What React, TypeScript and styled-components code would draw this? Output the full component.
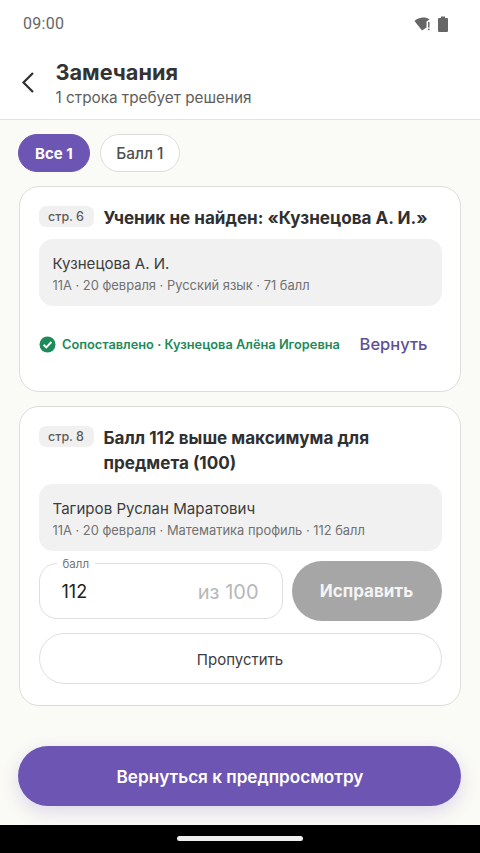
import React from "react";
import styled, { createGlobalStyle } from "styled-components";

const Global = createGlobalStyle`
  html, body { margin: 0; padding: 0; background: #fafaf6; }
  * { box-sizing: border-box; }
  #root { width: 480px; height: 853px; overflow: hidden; }
`;

const Page = styled.div`
  width: 480px;
  height: 853px;
  display: flex;
  flex-direction: column;
  background: #fafaf6;
  font-family: Inter, "Noto Sans", sans-serif;
  color: #2f2f2f;
`;

const Top = styled.header`
  height: 120px;
  background: #fff;
  border-bottom: 1.5px solid #e2e2e0;
  display: flex;
  flex-direction: column;
`;

const StatusBar = styled.div`
  height: 47px;
  padding: 0 32px 0 23px;
  display: flex;
  align-items: center;
  justify-content: space-between;
  color: #666;
  font-family: Roboto, sans-serif;
  font-size: 16px;
  letter-spacing: 0.3px;
`;

const StatusIcons = styled.div`
  display: flex;
  align-items: center;
  gap: 7px;
`;

const TitleBar = styled.div`
  display: flex;
  align-items: center;
  padding: 11px 0 0 19px;
  gap: 16.5px;
`;

const BackButton = styled.div`
  width: 20px;
  height: 24px;
  margin-bottom: 4px;
  color: #2f2f2f;
`;

const TitleText = styled.div`
  display: flex;
  flex-direction: column;
`;

const Title = styled.div`
  font-size: 21.7px;
  line-height: 28px;
  font-weight: 700;
  color: #333;
`;

const Subtitle = styled.div`
  font-size: 15.3px;
  line-height: 24px;
  color: #5e5e5e;
`;

const Content = styled.main`
  flex: 1;
  padding: 14px 19px 0;
  display: flex;
  flex-direction: column;
`;

const Chips = styled.div`
  display: flex;
  gap: 10px;
  margin: 0 0 14px -1px;
`;

const Chip = styled.div<{ $active?: boolean }>`
  height: 38px;
  padding: 0 ${(p) => (p.$active ? 16 : 15.5)}px;
  border-radius: 19px;
  display: flex;
  align-items: center;
  font-size: ${(p) => (p.$active ? 15 : 15.4)}px;
  font-weight: ${(p) => (p.$active ? 700 : 500)};
  color: ${(p) => (p.$active ? "#fff" : "#4f4f4f")};
  background: ${(p) => (p.$active ? "#6d55b4" : "#fff")};
  border: 1px solid ${(p) => (p.$active ? "#6d55b4" : "#dedede")};
`;

const Card = styled.section<{ $height: number }>`
  height: ${(p) => p.$height}px;
  background: #fff;
  border: 1.5px solid #dddddb;
  border-radius: 20px;
  padding: 18px 18.5px 0;
  margin-bottom: 14px;
  display: flex;
  flex-direction: column;
`;

const CardHead = styled.div`
  display: flex;
  align-items: flex-start;
  gap: 10px;
  margin-bottom: 9px;
`;

const PageBadge = styled.div`
  flex: none;
  width: 55px;
  height: 21px;
  margin-top: 1px;
  background: #f0f0f0;
  border-radius: 7px;
  display: flex;
  align-items: center;
  justify-content: center;
  font-size: 12.5px;
  font-weight: 500;
  color: #5c5c5c;
`;

const CardTitle = styled.div`
  font-size: 17.1px;
  line-height: 25px;
  font-weight: 700;
  color: #303030;
`;

const Info = styled.div`
  height: 67px;
  flex: none;
  background: #f1f1f1;
  border-radius: 14px;
  padding: 13px 14px 0;
`;

const InfoName = styled.div`
  font-size: 15.1px;
  line-height: 24px;
  color: #3d3d3d;
`;

const InfoMeta = styled.div`
  font-size: 12.9px;
  line-height: 18px;
  margin-top: 1px;
  color: #717171;
`;

const Resolved = styled.div`
  margin-top: 22px;
  padding: 0 14px 0 0.5px;
  height: 32px;
  display: flex;
  align-items: center;
  justify-content: space-between;
`;

const Match = styled.div`
  display: flex;
  align-items: center;
  gap: 6px;
  font-size: 12.8px;
  font-weight: 600;
  color: #1d8a5a;
`;

const Undo = styled.div`
  font-size: 16.5px;
  font-weight: 500;
  color: #5d4f96;
`;

const ScoreRow = styled.div`
  display: flex;
  align-items: center;
  gap: 9px;
  margin-top: 10px;
`;

const ScoreField = styled.div`
  position: relative;
  width: 244px;
  height: 56px;
  border: 1.5px solid #dedede;
  border-radius: 18px;
  padding: 1px 23px 0 22px;
  display: flex;
  align-items: center;
  justify-content: space-between;
`;

const ScoreLabel = styled.span`
  position: absolute;
  left: 17px;
  top: -8px;
  padding: 0 6px;
  background: #fff;
  font-size: 11.5px;
  line-height: 16px;
  color: #777;
`;

const ScoreValue = styled.span`
  font-size: 18px;
  color: #222;
`;

const ScoreMax = styled.span`
  font-size: 20px;
  color: #b8b8b8;
`;

const FixButton = styled.div`
  flex: 1;
  height: 60px;
  border-radius: 30px;
  background: #a6a6a6;
  display: flex;
  align-items: center;
  justify-content: center;
  color: #f4f4f4;
  font-size: 17px;
  font-weight: 700;
`;

const SkipButton = styled.div`
  height: 51px;
  margin-top: 12px;
  padding-top: 1px;
  border: 1.5px solid #dedede;
  border-radius: 26px;
  display: flex;
  align-items: center;
  justify-content: center;
  font-size: 15px;
  font-weight: 400;
  color: #3d3d3d;
`;

const Footer = styled.div`
  padding: 0 19px 19px 18px;
`;

const PrimaryButton = styled.div`
  height: 60px;
  padding-left: 1px;
  border-radius: 30px;
  background: #6d55b4;
  box-shadow: 0 6px 18px rgba(109, 85, 180, 0.2);
  display: flex;
  align-items: center;
  justify-content: center;
  color: #fff;
  font-size: 17.15px;
  font-weight: 600;
`;

const NavBar = styled.div`
  height: 28px;
  background: #000;
  display: flex;
  justify-content: center;
  padding-top: 11px;
`;

const NavPill = styled.div`
  width: 126px;
  height: 5px;
  border-radius: 3px;
  background: #eee;
`;

export default function App() {
  return (
    <Page>
      <Global />
      <Top>
        <StatusBar>
          <span>09:00</span>
          <StatusIcons>
            <svg width="17" height="16" viewBox="0 0 17 16" aria-hidden="true">
              <path d="M0.5 5C4 1.5 11 0 15.5 3.5L12.5 5.5V11.5L8 14.5Z" fill="#666" />
              <rect x="14" y="6" width="1.6" height="5.5" fill="#777" />
              <rect x="14" y="12.6" width="1.6" height="1.6" fill="#777" />
            </svg>
            <svg width="10" height="16" viewBox="0 0 10 16" aria-hidden="true">
              <path d="M3 0.5h4V2h2a1 1 0 0 1 1 1v12a1 1 0 0 1-1 1H1a1 1 0 0 1-1-1V3a1 1 0 0 1 1-1h2Z" fill="#666" />
            </svg>
          </StatusIcons>
        </StatusBar>
        <TitleBar>
          <BackButton>
            <svg width="20" height="24" viewBox="0 0 20 24" fill="none" stroke="currentColor" strokeWidth="2.2" aria-hidden="true">
              <path d="M14 3 4.5 12.5 14 22" />
            </svg>
          </BackButton>
          <TitleText>
            <Title>Замечания</Title>
            <Subtitle>1 строка требует решения</Subtitle>
          </TitleText>
        </TitleBar>
      </Top>
      <Content>
        <Chips>
          <Chip $active>Все 1</Chip>
          <Chip>Балл 1</Chip>
        </Chips>
        <Card $height={206}>
          <CardHead>
            <PageBadge>стр. 6</PageBadge>
            <CardTitle>Ученик не найден: «Кузнецова А. И.»</CardTitle>
          </CardHead>
          <Info>
            <InfoName>Кузнецова А. И.</InfoName>
            <InfoMeta>11А · 20 февраля · Русский язык · 71 балл</InfoMeta>
          </Info>
          <Resolved>
            <Match>
              <svg width="17" height="17" viewBox="0 0 17 17" aria-hidden="true">
                <circle cx="8.5" cy="8.5" r="8" fill="#1d8a5a" />
                <path d="M4.6 8.8 7.3 11.4 12.4 6" fill="none" stroke="#fff" strokeWidth="2" />
              </svg>
              Сопоставлено · Кузнецова Алёна Игоревна
            </Match>
            <Undo>Вернуть</Undo>
          </Resolved>
        </Card>
        <Card $height={300}>
          <CardHead>
            <PageBadge>стр. 8</PageBadge>
            <CardTitle>Балл 112 выше максимума для предмета (100)</CardTitle>
          </CardHead>
          <Info>
            <InfoName>Тагиров Руслан Маратович</InfoName>
            <InfoMeta>11А · 20 февраля · Математика профиль · 112 балл</InfoMeta>
          </Info>
          <ScoreRow>
            <ScoreField>
              <ScoreLabel>балл</ScoreLabel>
              <ScoreValue>112</ScoreValue>
              <ScoreMax>из 100</ScoreMax>
            </ScoreField>
            <FixButton>Исправить</FixButton>
          </ScoreRow>
          <SkipButton>Пропустить</SkipButton>
        </Card>
      </Content>
      <Footer>
        <PrimaryButton>Вернуться к предпросмотру</PrimaryButton>
      </Footer>
      <NavBar>
        <NavPill />
      </NavBar>
    </Page>
  );
}
